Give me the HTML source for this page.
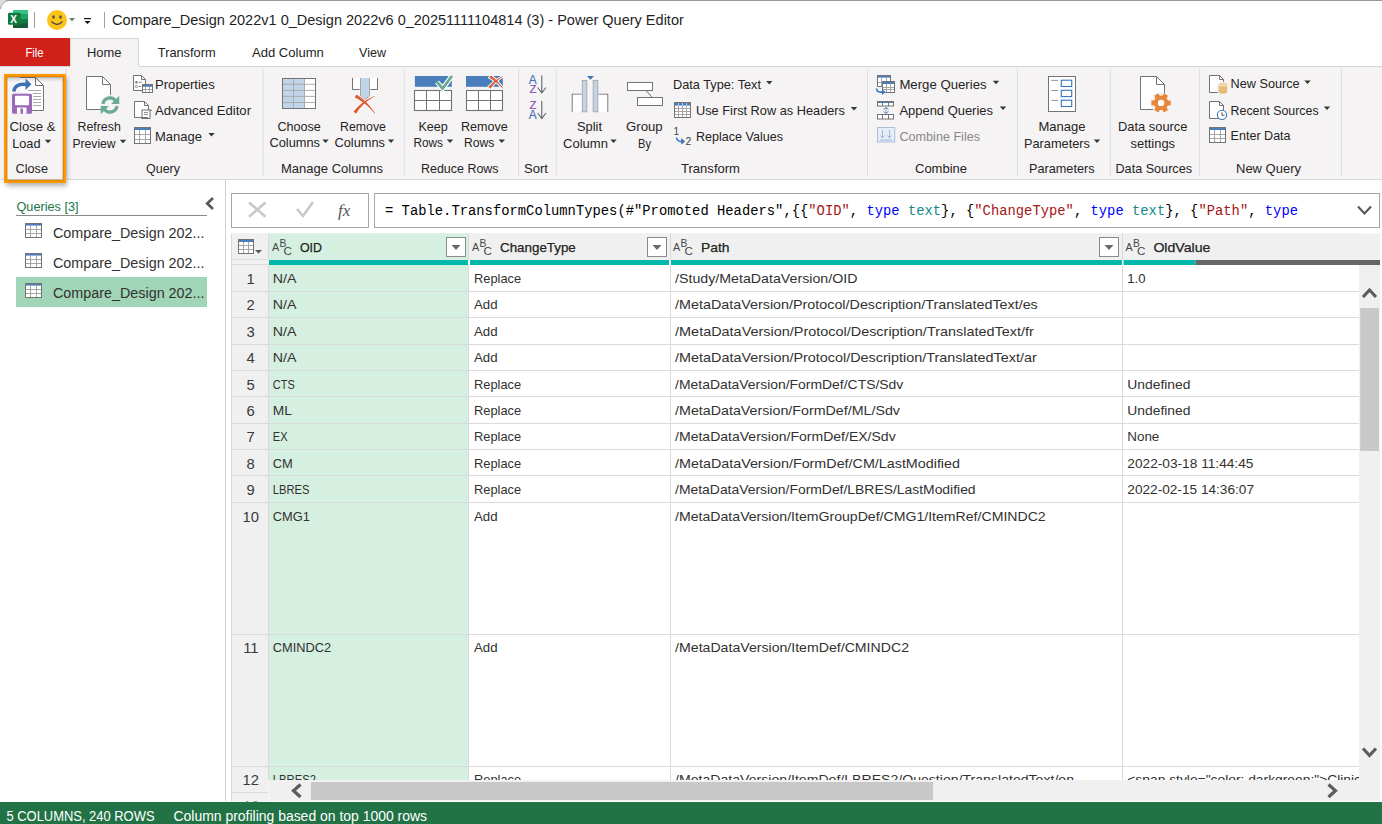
<!DOCTYPE html>
<html><head><meta charset="utf-8"><style>
html,body{margin:0;padding:0;width:1382px;height:824px;overflow:hidden;background:#fff}
svg{display:block;font-family:"Liberation Sans",sans-serif}
</style></head><body>
<svg width="1382" height="824" viewBox="0 0 1382 824"><rect x="0" y="0" width="1382" height="38" fill="#ffffff" /><rect x="0" y="0" width="1382" height="1" fill="#9a9a9a" /><path d="M0,0 H9 A9,9 0 0 0 0,9 Z" fill="#dcdcdc" /><path d="M9,0.5 A9,9 0 0 0 0.5,9" fill="none" stroke="#9a9a9a" stroke-width="1" /><rect x="13" y="10" width="15" height="18" fill="#185c37" /><rect x="13" y="10" width="15" height="4.5" fill="#33c481" /><rect x="13" y="14.5" width="15" height="4.5" fill="#21a366" /><rect x="13" y="19" width="15" height="4.5" fill="#107c41" /><rect x="13" y="23.5" width="15" height="4.4" fill="#185c37" /><rect x="8" y="12.7" width="12.7" height="12.1" fill="#107c41" rx="1"/><text x="10.20" y="22.60" font-size="10" fill="#ffffff" font-weight="bold" >X</text><line x1="34.5" y1="12" x2="34.5" y2="28" stroke="#8fa89a" stroke-width="1" /><circle cx="57" cy="20" r="10" fill="#fcc419"/><ellipse cx="53.5" cy="17" rx="1.3" ry="1.8" fill="#4a4a4a"/><ellipse cx="60.5" cy="17" rx="1.3" ry="1.8" fill="#4a4a4a"/><path d="M51.5,21.5 Q57,27.5 62.5,21.5" fill="none" stroke="#4a4a4a" stroke-width="1.3" /><path d="M69,18 h6 l-3,3.2 z" fill="#5e7c6c" /><rect x="84" y="18" width="7" height="1.2" fill="#111" /><path d="M84.5,21 h6 l-3,3 z" fill="#111" /><line x1="104.5" y1="12" x2="104.5" y2="28" stroke="#8fa89a" stroke-width="1" /><text x="112.00" y="24.80" font-size="15.2" fill="#1f1f1f" textLength="571.80" lengthAdjust="spacingAndGlyphs" >Compare_Design 2022v1 0_Design 2022v6 0_20251111104814 (3) - Power Query Editor</text><rect x="0" y="38" width="70" height="28" fill="#d2201a" /><text x="25.50" y="57.00" font-size="13.4" fill="#ffffff" textLength="18.00" lengthAdjust="spacingAndGlyphs" >File</text><rect x="70" y="38.5" width="69" height="28" fill="#f5f3f4" /><path d="M70.5,66 V38.5 H138.5 V66" fill="none" stroke="#d6d6d6" stroke-width="1" /><text x="87.00" y="57.00" font-size="13.4" fill="#252423" textLength="34.49" lengthAdjust="spacingAndGlyphs" >Home</text><text x="157.80" y="56.80" font-size="13.4" fill="#252423" textLength="57.80" lengthAdjust="spacingAndGlyphs" >Transform</text><text x="252.00" y="56.80" font-size="13.4" fill="#252423" textLength="71.80" lengthAdjust="spacingAndGlyphs" >Add Column</text><text x="359.00" y="56.80" font-size="13.4" fill="#252423" textLength="26.97" lengthAdjust="spacingAndGlyphs" >View</text><rect x="0" y="66" width="1382" height="113.5" fill="#f5f3f4" /><line x1="0" y1="66.5" x2="70" y2="66.5" stroke="#d6d6d6" stroke-width="1" /><line x1="139" y1="66.5" x2="1382" y2="66.5" stroke="#d6d6d6" stroke-width="1" /><line x1="0" y1="179.5" x2="1382" y2="179.5" stroke="#d9d9d9" stroke-width="1" /><line x1="66" y1="69" x2="66" y2="176" stroke="#dcdcdc" stroke-width="1" /><line x1="263" y1="69" x2="263" y2="176" stroke="#dcdcdc" stroke-width="1" /><line x1="404.3" y1="69" x2="404.3" y2="176" stroke="#dcdcdc" stroke-width="1" /><line x1="518.7" y1="69" x2="518.7" y2="176" stroke="#dcdcdc" stroke-width="1" /><line x1="556.3" y1="69" x2="556.3" y2="176" stroke="#dcdcdc" stroke-width="1" /><line x1="867.6" y1="69" x2="867.6" y2="176" stroke="#dcdcdc" stroke-width="1" /><line x1="1017.5" y1="69" x2="1017.5" y2="176" stroke="#dcdcdc" stroke-width="1" /><line x1="1110.2" y1="69" x2="1110.2" y2="176" stroke="#dcdcdc" stroke-width="1" /><line x1="1199.6" y1="69" x2="1199.6" y2="176" stroke="#dcdcdc" stroke-width="1" /><line x1="1341.4" y1="69" x2="1341.4" y2="176" stroke="#dcdcdc" stroke-width="1" /><text x="15.50" y="173.30" font-size="13.4" fill="#252423" textLength="32.50" lengthAdjust="spacingAndGlyphs" >Close</text><text x="146.00" y="173.30" font-size="13.4" fill="#252423" textLength="34.00" lengthAdjust="spacingAndGlyphs" >Query</text><text x="281.00" y="173.30" font-size="13.4" fill="#252423" textLength="102.01" lengthAdjust="spacingAndGlyphs" >Manage Columns</text><text x="421.00" y="173.30" font-size="13.4" fill="#252423" textLength="77.60" lengthAdjust="spacingAndGlyphs" >Reduce Rows</text><text x="524.00" y="173.30" font-size="13.4" fill="#252423" textLength="24.00" lengthAdjust="spacingAndGlyphs" >Sort</text><text x="681.00" y="173.30" font-size="13.4" fill="#252423" textLength="59.00" lengthAdjust="spacingAndGlyphs" >Transform</text><text x="915.00" y="173.30" font-size="13.4" fill="#252423" textLength="52.00" lengthAdjust="spacingAndGlyphs" >Combine</text><text x="1029.00" y="173.30" font-size="13.4" fill="#252423" textLength="65.59" lengthAdjust="spacingAndGlyphs" >Parameters</text><text x="1115.50" y="173.30" font-size="13.4" fill="#252423" textLength="76.49" lengthAdjust="spacingAndGlyphs" >Data Sources</text><text x="1236.00" y="173.30" font-size="13.4" fill="#252423" textLength="65.01" lengthAdjust="spacingAndGlyphs" >New Query</text><text x="9.50" y="131.00" font-size="13.4" fill="#252423" textLength="46.01" lengthAdjust="spacingAndGlyphs" >Close &amp;</text><text x="12.20" y="147.60" font-size="13.4" fill="#252423" textLength="28.29" lengthAdjust="spacingAndGlyphs" >Load</text><path d="M44.8,139.70000000000002 h6.4 l-3.2,3.5 z" fill="#2b3b35" /><text x="77.50" y="131.00" font-size="13.4" fill="#252423" textLength="43.31" lengthAdjust="spacingAndGlyphs" >Refresh</text><text x="72.40" y="147.60" font-size="13.4" fill="#252423" textLength="43.26" lengthAdjust="spacingAndGlyphs" >Preview</text><path d="M119.8,139.70000000000002 h6.4 l-3.2,3.5 z" fill="#2b3b35" /><text x="155.00" y="88.80" font-size="13.4" fill="#252423" textLength="59.70" lengthAdjust="spacingAndGlyphs" >Properties</text><text x="155.00" y="115.00" font-size="13.4" fill="#252423" textLength="96.00" lengthAdjust="spacingAndGlyphs" >Advanced Editor</text><text x="155.00" y="140.80" font-size="13.4" fill="#252423" textLength="47.00" lengthAdjust="spacingAndGlyphs" >Manage</text><path d="M208.3,132.9 h6.4 l-3.2,3.5 z" fill="#2b3b35" /><text x="277.40" y="130.70" font-size="13.4" fill="#252423" textLength="43.40" lengthAdjust="spacingAndGlyphs" >Choose</text><text x="269.50" y="147.40" font-size="13.4" fill="#252423" textLength="50.50" lengthAdjust="spacingAndGlyphs" >Columns</text><path d="M322.3,139.5 h6.4 l-3.2,3.5 z" fill="#2b3b35" /><text x="340.00" y="130.70" font-size="13.4" fill="#252423" textLength="46.00" lengthAdjust="spacingAndGlyphs" >Remove</text><text x="334.50" y="147.40" font-size="13.4" fill="#252423" textLength="50.50" lengthAdjust="spacingAndGlyphs" >Columns</text><path d="M387.8,139.5 h6.4 l-3.2,3.5 z" fill="#2b3b35" /><text x="418.50" y="130.70" font-size="13.4" fill="#252423" textLength="29.31" lengthAdjust="spacingAndGlyphs" >Keep</text><text x="413.50" y="147.40" font-size="13.4" fill="#252423" textLength="29.49" lengthAdjust="spacingAndGlyphs" >Rows</text><path d="M446.8,139.5 h6.4 l-3.2,3.5 z" fill="#2b3b35" /><text x="461.00" y="130.70" font-size="13.4" fill="#252423" textLength="46.80" lengthAdjust="spacingAndGlyphs" >Remove</text><text x="464.00" y="147.40" font-size="13.4" fill="#252423" textLength="30.39" lengthAdjust="spacingAndGlyphs" >Rows</text><path d="M498.6,139.5 h6.4 l-3.2,3.5 z" fill="#2b3b35" /><text x="577.00" y="131.00" font-size="13.4" fill="#252423" textLength="25.00" lengthAdjust="spacingAndGlyphs" >Split</text><text x="563.00" y="147.50" font-size="13.4" fill="#252423" textLength="45.00" lengthAdjust="spacingAndGlyphs" >Column</text><path d="M610.3,139.60000000000002 h6.4 l-3.2,3.5 z" fill="#2b3b35" /><text x="626.00" y="131.00" font-size="13.4" fill="#252423" textLength="36.70" lengthAdjust="spacingAndGlyphs" >Group</text><text x="638.00" y="147.50" font-size="13.4" fill="#252423" textLength="13.00" lengthAdjust="spacingAndGlyphs" >By</text><text x="673.00" y="89.20" font-size="13.4" fill="#252423" textLength="88.00" lengthAdjust="spacingAndGlyphs" >Data Type: Text</text><path d="M766.0999999999999,81.1 h6.4 l-3.2,3.5 z" fill="#2b3b35" /><text x="696.00" y="115.00" font-size="13.4" fill="#252423" textLength="149.00" lengthAdjust="spacingAndGlyphs" >Use First Row as Headers</text><path d="M850.8,107.0 h6.4 l-3.2,3.5 z" fill="#2b3b35" /><text x="696.00" y="141.30" font-size="13.4" fill="#252423" textLength="87.00" lengthAdjust="spacingAndGlyphs" >Replace Values</text><text x="899.40" y="88.60" font-size="13.4" fill="#252423" textLength="87.20" lengthAdjust="spacingAndGlyphs" >Merge Queries</text><path d="M992.8,80.7 h6.4 l-3.2,3.5 z" fill="#2b3b35" /><text x="899.40" y="115.20" font-size="13.4" fill="#252423" textLength="93.60" lengthAdjust="spacingAndGlyphs" >Append Queries</text><path d="M999.8,106.39999999999999 h6.4 l-3.2,3.5 z" fill="#2b3b35" /><text x="899.50" y="140.70" font-size="13.4" fill="#8a8886" textLength="80.50" lengthAdjust="spacingAndGlyphs" >Combine Files</text><text x="1038.50" y="131.00" font-size="13.4" fill="#252423" textLength="47.10" lengthAdjust="spacingAndGlyphs" >Manage</text><text x="1024.00" y="147.50" font-size="13.4" fill="#252423" textLength="65.99" lengthAdjust="spacingAndGlyphs" >Parameters</text><path d="M1093.8,139.60000000000002 h6.4 l-3.2,3.5 z" fill="#2b3b35" /><text x="1118.00" y="130.90" font-size="13.4" fill="#252423" textLength="69.49" lengthAdjust="spacingAndGlyphs" >Data source</text><text x="1130.60" y="147.60" font-size="13.4" fill="#252423" textLength="44.40" lengthAdjust="spacingAndGlyphs" >settings</text><text x="1230.60" y="88.40" font-size="13.4" fill="#252423" textLength="69.00" lengthAdjust="spacingAndGlyphs" >New Source</text><path d="M1304.3,80.5 h6.4 l-3.2,3.5 z" fill="#2b3b35" /><text x="1230.60" y="115.20" font-size="13.4" fill="#252423" textLength="88.00" lengthAdjust="spacingAndGlyphs" >Recent Sources</text><path d="M1323.8,106.39999999999999 h6.4 l-3.2,3.5 z" fill="#2b3b35" /><text x="1230.60" y="140.00" font-size="13.4" fill="#252423" textLength="59.99" lengthAdjust="spacingAndGlyphs" >Enter Data</text><filter id="shb" x="-20%" y="-20%" width="140%" height="140%"><feGaussianBlur stdDeviation="2.6"/></filter><clipPath id="shc"><path d="M0,0 H200 V260 H0 Z M4,74 V183 H66 V74 Z" clip-rule="evenodd"/></clipPath><g clip-path="url(#shc)"><rect x="6" y="77" width="61" height="109" fill="#000" fill-opacity="0.30" filter="url(#shb)"/></g><rect x="5.6" y="75.6" width="58.8" height="105.8" fill="none" stroke="#ff9800" stroke-width="3.2"/><text x="16.50" y="211.00" font-size="13.4" fill="#217346" textLength="62.00" lengthAdjust="spacingAndGlyphs" >Queries [3]</text><line x1="16" y1="215.5" x2="207" y2="215.5" stroke="#8a8a8a" stroke-width="1" /><path d="M213,198 L207.2,203.5 L213,209" fill="none" stroke="#555" stroke-width="2.6" /><rect x="16" y="277" width="191" height="30" fill="#a0d6b7" /><text x="53.00" y="237.70" font-size="15.3" fill="#323130" textLength="151.49" lengthAdjust="spacingAndGlyphs" >Compare_Design 202...</text><text x="53.00" y="267.70" font-size="15.3" fill="#323130" textLength="151.49" lengthAdjust="spacingAndGlyphs" >Compare_Design 202...</text><text x="53.00" y="297.70" font-size="15.3" fill="#323130" textLength="151.49" lengthAdjust="spacingAndGlyphs" >Compare_Design 202...</text><line x1="225.5" y1="180" x2="225.5" y2="801" stroke="#d0d0d0" stroke-width="1" /><rect x="231.5" y="193.5" width="137" height="34" fill="#ffffff" stroke="#a6a6a6" stroke-width="1"/><path d="M249,202.5 L265.5,216.8 M265.5,202.5 L249,216.8" fill="none" stroke="#c8c8c8" stroke-width="2.6" /><path d="M297,209 L303,216 L313,202" fill="none" stroke="#c8c8c8" stroke-width="2.6" /><text x="338" y="216" font-family="Liberation Serif, serif" font-style="italic" font-size="17" fill="#555">fx</text><rect x="374.5" y="193.5" width="1005" height="34" fill="#ffffff" stroke="#a6a6a6" stroke-width="1"/><text x="385" y="215" font-family="Liberation Mono, monospace" font-size="13.8" textLength="913" lengthAdjust="spacing" xml:space="preserve"><tspan fill="#000">= Table.TransformColumnTypes(#"Promoted Headers",{{</tspan><tspan fill="#a31515">"OID"</tspan><tspan fill="#000">, </tspan><tspan fill="#0000ff">type</tspan><tspan fill="#000"> </tspan><tspan fill="#16897f">text</tspan><tspan fill="#000">}, {</tspan><tspan fill="#a31515">"ChangeType"</tspan><tspan fill="#000">, </tspan><tspan fill="#0000ff">type</tspan><tspan fill="#000"> </tspan><tspan fill="#16897f">text</tspan><tspan fill="#000">}, {</tspan><tspan fill="#a31515">"Path"</tspan><tspan fill="#000">, </tspan><tspan fill="#0000ff">type</tspan></text><path d="M1358,206.5 L1364.5,213.5 L1371,206.5" fill="none" stroke="#555" stroke-width="2" /><rect x="231" y="233.5" width="1149" height="568" fill="#ffffff" /><rect x="231" y="233.5" width="1128" height="26.5" fill="#f0f0f0" /><rect x="231" y="233.5" width="1149" height="26.5" fill="#f0f0f0" /><rect x="269" y="233.5" width="199.5" height="26.5" fill="#d5efe0" /><rect x="231" y="260" width="37.5" height="541.5" fill="#f0f0f0" /><rect x="269" y="265" width="199" height="536" fill="#d5efe0" /><rect x="269" y="260" width="199" height="5" fill="#01b8aa" /><rect x="470" y="260" width="199" height="5" fill="#01b8aa" /><rect x="671" y="260" width="451" height="5" fill="#01b8aa" /><rect x="1123.5" y="260" width="72" height="5" fill="#01b8aa" /><rect x="1195.5" y="260" width="184.5" height="5" fill="#666666" /><line x1="231" y1="259.5" x2="268.5" y2="259.5" stroke="#dadada" stroke-width="1" /><line x1="231" y1="264.5" x2="268.5" y2="264.5" stroke="#dadada" stroke-width="1" /><line x1="231.5" y1="233.5" x2="231.5" y2="801.5" stroke="#dadada" stroke-width="1" /><line x1="268.5" y1="233.5" x2="268.5" y2="260" stroke="#dadada" stroke-width="1" /><line x1="268.5" y1="265" x2="268.5" y2="780" stroke="#dadada" stroke-width="1" /><line x1="468.5" y1="233.5" x2="468.5" y2="260" stroke="#dadada" stroke-width="1" /><line x1="468.5" y1="265" x2="468.5" y2="780" stroke="#dadada" stroke-width="1" /><line x1="670.5" y1="233.5" x2="670.5" y2="260" stroke="#dadada" stroke-width="1" /><line x1="670.5" y1="265" x2="670.5" y2="780" stroke="#dadada" stroke-width="1" /><line x1="1122.5" y1="233.5" x2="1122.5" y2="260" stroke="#dadada" stroke-width="1" /><line x1="1122.5" y1="265" x2="1122.5" y2="780" stroke="#dadada" stroke-width="1" /><line x1="231" y1="291.5" x2="268.5" y2="291.5" stroke="#dadada" stroke-width="1" /><line x1="269" y1="291.5" x2="1359" y2="291.5" stroke="#dadada" stroke-width="1" /><line x1="231" y1="317.5" x2="268.5" y2="317.5" stroke="#dadada" stroke-width="1" /><line x1="269" y1="317.5" x2="1359" y2="317.5" stroke="#dadada" stroke-width="1" /><line x1="231" y1="344.5" x2="268.5" y2="344.5" stroke="#dadada" stroke-width="1" /><line x1="269" y1="344.5" x2="1359" y2="344.5" stroke="#dadada" stroke-width="1" /><line x1="231" y1="370.5" x2="268.5" y2="370.5" stroke="#dadada" stroke-width="1" /><line x1="269" y1="370.5" x2="1359" y2="370.5" stroke="#dadada" stroke-width="1" /><line x1="231" y1="396.5" x2="268.5" y2="396.5" stroke="#dadada" stroke-width="1" /><line x1="269" y1="396.5" x2="1359" y2="396.5" stroke="#dadada" stroke-width="1" /><line x1="231" y1="423.5" x2="268.5" y2="423.5" stroke="#dadada" stroke-width="1" /><line x1="269" y1="423.5" x2="1359" y2="423.5" stroke="#dadada" stroke-width="1" /><line x1="231" y1="449.5" x2="268.5" y2="449.5" stroke="#dadada" stroke-width="1" /><line x1="269" y1="449.5" x2="1359" y2="449.5" stroke="#dadada" stroke-width="1" /><line x1="231" y1="475.5" x2="268.5" y2="475.5" stroke="#dadada" stroke-width="1" /><line x1="269" y1="475.5" x2="1359" y2="475.5" stroke="#dadada" stroke-width="1" /><line x1="231" y1="502.5" x2="268.5" y2="502.5" stroke="#dadada" stroke-width="1" /><line x1="269" y1="502.5" x2="1359" y2="502.5" stroke="#dadada" stroke-width="1" /><line x1="231" y1="634.5" x2="268.5" y2="634.5" stroke="#dadada" stroke-width="1" /><line x1="269" y1="634.5" x2="1359" y2="634.5" stroke="#dadada" stroke-width="1" /><line x1="231" y1="766.5" x2="268.5" y2="766.5" stroke="#dadada" stroke-width="1" /><line x1="269" y1="766.5" x2="1359" y2="766.5" stroke="#dadada" stroke-width="1" /><line x1="231" y1="792.5" x2="268.5" y2="792.5" stroke="#dadada" stroke-width="1" /><line x1="269" y1="792.5" x2="1359" y2="792.5" stroke="#dadada" stroke-width="1" /><rect x="238.5" y="239.5" width="15" height="14" fill="#ffffff" /><rect x="238" y="239" width="16" height="3" fill="#4a7ebb" /><path d="M238.5,245.5 H253.5 M238.5,249.5 H253.5 M243.5,242 V253.5 M248.5,242 V253.5" fill="none" stroke="#a6a6a6" stroke-width="1" /><rect x="238.5" y="239.5" width="15" height="14" fill="none" stroke="#737373" stroke-width="1"/><path d="M255,250 h7 l-3.5,3.6 z" fill="#555" /><text x="272.00" y="251.00" font-size="10.8" fill="#474747" >A</text><text x="279.60" y="247.00" font-size="10.3" fill="#474747" >B</text><text x="283.60" y="255.00" font-size="11.6" fill="#474747" >C</text><text x="300.00" y="252.20" font-size="12.8" fill="#252423" textLength="22.00" lengthAdjust="spacingAndGlyphs" stroke="#252423" stroke-width="0.25">OID</text><rect x="446.5" y="237.5" width="19" height="19" fill="#ffffff" stroke="#8a8a8a" stroke-width="1"/><path d="M451.5,245 h9 l-4.5,5 z" fill="#6a6a6a" /><text x="472.00" y="251.00" font-size="10.8" fill="#474747" >A</text><text x="479.60" y="247.00" font-size="10.3" fill="#474747" >B</text><text x="483.60" y="255.00" font-size="11.6" fill="#474747" >C</text><text x="500.00" y="252.20" font-size="12.8" fill="#252423" textLength="75.80" lengthAdjust="spacingAndGlyphs" stroke="#252423" stroke-width="0.25">ChangeType</text><rect x="647.5" y="237.5" width="19" height="19" fill="#ffffff" stroke="#8a8a8a" stroke-width="1"/><path d="M652.5,245 h9 l-4.5,5 z" fill="#6a6a6a" /><text x="673.00" y="251.00" font-size="10.8" fill="#474747" >A</text><text x="680.60" y="247.00" font-size="10.3" fill="#474747" >B</text><text x="684.60" y="255.00" font-size="11.6" fill="#474747" >C</text><text x="701.00" y="252.20" font-size="12.8" fill="#252423" textLength="28.50" lengthAdjust="spacingAndGlyphs" stroke="#252423" stroke-width="0.25">Path</text><rect x="1099.5" y="237.5" width="19" height="19" fill="#ffffff" stroke="#8a8a8a" stroke-width="1"/><path d="M1104.5,245 h9 l-4.5,5 z" fill="#6a6a6a" /><text x="1125.40" y="251.00" font-size="10.8" fill="#474747" >A</text><text x="1133.00" y="247.00" font-size="10.3" fill="#474747" >B</text><text x="1137.00" y="255.00" font-size="11.6" fill="#474747" >C</text><text x="1153.40" y="252.20" font-size="12.8" fill="#252423" textLength="56.99" lengthAdjust="spacingAndGlyphs" stroke="#252423" stroke-width="0.25">OldValue</text><clipPath id="gclip"><rect x="231" y="265" width="1128" height="515"/></clipPath><g clip-path="url(#gclip)"><text x="272.80" y="283.00" font-size="12.7" fill="#323130" textLength="23.70" lengthAdjust="spacingAndGlyphs" >N/A</text><text x="474.00" y="283.00" font-size="12.7" fill="#323130" textLength="47.20" lengthAdjust="spacingAndGlyphs" >Replace</text><text x="675.10" y="283.00" font-size="12.7" fill="#323130" textLength="182.31" lengthAdjust="spacingAndGlyphs" >/Study/MetaDataVersion/OID</text><text x="1127.30" y="283.00" font-size="12.7" fill="#323130" textLength="18.30" lengthAdjust="spacingAndGlyphs" >1.0</text><text x="272.80" y="309.00" font-size="12.7" fill="#323130" textLength="23.70" lengthAdjust="spacingAndGlyphs" >N/A</text><text x="474.00" y="309.00" font-size="12.7" fill="#323130" textLength="23.60" lengthAdjust="spacingAndGlyphs" >Add</text><text x="675.10" y="309.00" font-size="12.7" fill="#323130" textLength="362.70" lengthAdjust="spacingAndGlyphs" >/MetaDataVersion/Protocol/Description/TranslatedText/es</text><text x="272.80" y="336.00" font-size="12.7" fill="#323130" textLength="23.70" lengthAdjust="spacingAndGlyphs" >N/A</text><text x="474.00" y="336.00" font-size="12.7" fill="#323130" textLength="23.60" lengthAdjust="spacingAndGlyphs" >Add</text><text x="675.10" y="336.00" font-size="12.7" fill="#323130" textLength="358.70" lengthAdjust="spacingAndGlyphs" >/MetaDataVersion/Protocol/Description/TranslatedText/fr</text><text x="272.80" y="362.00" font-size="12.7" fill="#323130" textLength="23.70" lengthAdjust="spacingAndGlyphs" >N/A</text><text x="474.00" y="362.00" font-size="12.7" fill="#323130" textLength="23.60" lengthAdjust="spacingAndGlyphs" >Add</text><text x="675.10" y="362.00" font-size="12.7" fill="#323130" textLength="361.70" lengthAdjust="spacingAndGlyphs" >/MetaDataVersion/Protocol/Description/TranslatedText/ar</text><text x="272.80" y="389.00" font-size="12.7" fill="#323130" textLength="22.00" lengthAdjust="spacingAndGlyphs" >CTS</text><text x="474.00" y="389.00" font-size="12.7" fill="#323130" textLength="47.20" lengthAdjust="spacingAndGlyphs" >Replace</text><text x="675.10" y="389.00" font-size="12.7" fill="#323130" textLength="228.20" lengthAdjust="spacingAndGlyphs" >/MetaDataVersion/FormDef/CTS/Sdv</text><text x="1127.30" y="389.00" font-size="12.7" fill="#323130" textLength="63.20" lengthAdjust="spacingAndGlyphs" >Undefined</text><text x="272.80" y="415.00" font-size="12.7" fill="#323130" textLength="19.10" lengthAdjust="spacingAndGlyphs" >ML</text><text x="474.00" y="415.00" font-size="12.7" fill="#323130" textLength="47.20" lengthAdjust="spacingAndGlyphs" >Replace</text><text x="675.10" y="415.00" font-size="12.7" fill="#323130" textLength="224.90" lengthAdjust="spacingAndGlyphs" >/MetaDataVersion/FormDef/ML/Sdv</text><text x="1127.30" y="415.00" font-size="12.7" fill="#323130" textLength="63.20" lengthAdjust="spacingAndGlyphs" >Undefined</text><text x="272.80" y="441.00" font-size="12.7" fill="#323130" textLength="14.70" lengthAdjust="spacingAndGlyphs" >EX</text><text x="474.00" y="441.00" font-size="12.7" fill="#323130" textLength="47.20" lengthAdjust="spacingAndGlyphs" >Replace</text><text x="675.10" y="441.00" font-size="12.7" fill="#323130" textLength="220.60" lengthAdjust="spacingAndGlyphs" >/MetaDataVersion/FormDef/EX/Sdv</text><text x="1127.30" y="441.00" font-size="12.7" fill="#323130" textLength="32.00" lengthAdjust="spacingAndGlyphs" >None</text><text x="272.80" y="468.00" font-size="12.7" fill="#323130" textLength="20.00" lengthAdjust="spacingAndGlyphs" >CM</text><text x="474.00" y="468.00" font-size="12.7" fill="#323130" textLength="47.20" lengthAdjust="spacingAndGlyphs" >Replace</text><text x="675.10" y="468.00" font-size="12.7" fill="#323130" textLength="284.89" lengthAdjust="spacingAndGlyphs" >/MetaDataVersion/FormDef/CM/LastModified</text><text x="1127.30" y="468.00" font-size="12.7" fill="#323130" textLength="126.11" lengthAdjust="spacingAndGlyphs" >2022-03-18 11:44:45</text><text x="272.80" y="494.00" font-size="12.7" fill="#323130" textLength="36.60" lengthAdjust="spacingAndGlyphs" >LBRES</text><text x="474.00" y="494.00" font-size="12.7" fill="#323130" textLength="47.20" lengthAdjust="spacingAndGlyphs" >Replace</text><text x="675.10" y="494.00" font-size="12.7" fill="#323130" textLength="300.50" lengthAdjust="spacingAndGlyphs" >/MetaDataVersion/FormDef/LBRES/LastModified</text><text x="1127.30" y="494.00" font-size="12.7" fill="#323130" textLength="126.70" lengthAdjust="spacingAndGlyphs" >2022-02-15 14:36:07</text><text x="272.80" y="521.00" font-size="12.7" fill="#323130" textLength="37.20" lengthAdjust="spacingAndGlyphs" >CMG1</text><text x="474.00" y="521.00" font-size="12.7" fill="#323130" textLength="23.60" lengthAdjust="spacingAndGlyphs" >Add</text><text x="675.10" y="521.00" font-size="12.7" fill="#323130" textLength="370.60" lengthAdjust="spacingAndGlyphs" >/MetaDataVersion/ItemGroupDef/CMG1/ItemRef/CMINDC2</text><text x="272.80" y="652.00" font-size="12.7" fill="#323130" textLength="58.40" lengthAdjust="spacingAndGlyphs" >CMINDC2</text><text x="474.00" y="652.00" font-size="12.7" fill="#323130" textLength="23.60" lengthAdjust="spacingAndGlyphs" >Add</text><text x="675.10" y="652.00" font-size="12.7" fill="#323130" textLength="233.90" lengthAdjust="spacingAndGlyphs" >/MetaDataVersion/ItemDef/CMINDC2</text><text x="272.80" y="784.00" font-size="12.7" fill="#323130" textLength="43.21" lengthAdjust="spacingAndGlyphs" >LBRES2</text><text x="474.00" y="784.00" font-size="12.7" fill="#323130" textLength="47.20" lengthAdjust="spacingAndGlyphs" >Replace</text><text x="675.10" y="784.00" font-size="12.7" fill="#323130" textLength="398.90" lengthAdjust="spacingAndGlyphs" >/MetaDataVersion/ItemDef/LBRES2/Question/TranslatedText/en</text><text x="1127.30" y="784.00" font-size="12.7" fill="#323130" textLength="271.35" lengthAdjust="spacingAndGlyphs" >&lt;span style=&quot;color: darkgreen;&quot;&gt;Clinical Lab</text></g><clipPath id="rclip"><rect x="231" y="265" width="37" height="536.5"/></clipPath><g clip-path="url(#rclip)"><text x="246.51" y="284.00" font-size="14.8" fill="#3b3a39" >1</text><text x="246.51" y="310.00" font-size="14.8" fill="#3b3a39" >2</text><text x="246.51" y="337.00" font-size="14.8" fill="#3b3a39" >3</text><text x="246.51" y="363.00" font-size="14.8" fill="#3b3a39" >4</text><text x="246.51" y="390.00" font-size="14.8" fill="#3b3a39" >5</text><text x="246.51" y="416.00" font-size="14.8" fill="#3b3a39" >6</text><text x="246.51" y="442.00" font-size="14.8" fill="#3b3a39" >7</text><text x="246.51" y="469.00" font-size="14.8" fill="#3b3a39" >8</text><text x="246.51" y="495.00" font-size="14.8" fill="#3b3a39" >9</text><text x="242.61" y="522.00" font-size="14.8" fill="#3b3a39" >10</text><text x="243.13" y="653.00" font-size="14.8" fill="#3b3a39" >11</text><text x="242.61" y="785.00" font-size="14.8" fill="#3b3a39" >12</text><text x="243.00" y="811.00" font-size="14.8" fill="#3b3a39" >13</text></g><rect x="1359" y="265" width="21" height="536" fill="#f0f0f0" /><rect x="1360.2" y="308" width="18.7" height="143" fill="#c8c8c8" /><path d="M1363,297 L1369.5,290 L1376,297" fill="none" stroke="#5c5c5c" stroke-width="3.2" /><path d="M1363,748.5 L1369.5,755.5 L1376,748.5" fill="none" stroke="#5c5c5c" stroke-width="3.2" /><rect x="269" y="780" width="1090" height="21" fill="#f0f0f0" /><rect x="311" y="782" width="622" height="18" fill="#c8c8c8" /><path d="M300.5,784.5 L293.5,790.8 L300.5,797" fill="none" stroke="#5c5c5c" stroke-width="3.2" /><path d="M1328.5,784.5 L1335.5,790.8 L1328.5,797" fill="none" stroke="#5c5c5c" stroke-width="3.2" /><rect x="0" y="802" width="1382" height="22" fill="#217346" /><text x="6.50" y="820.60" font-size="13.8" fill="#ffffff" textLength="148.00" lengthAdjust="spacingAndGlyphs" >5 COLUMNS, 240 ROWS</text><text x="173.50" y="820.60" font-size="13.8" fill="#ffffff" textLength="253.50" lengthAdjust="spacingAndGlyphs" >Column profiling based on top 1000 rows</text><rect x="7" y="77" width="56" height="103" fill="none" stroke="#000" stroke-opacity="0.10" stroke-width="2"/><path d="M19.5,77.5 H35.5 L43.5,85.5 V110.5 H28 V92 H19.5 Z" fill="#fff" /><path d="M19.5,77.5 H35.5 L43.5,85.5 V110.5 H30" fill="none" stroke="#737373" stroke-width="1" /><path d="M35.5,77.5 V85.5 H43.5" fill="none" stroke="#737373" stroke-width="1" /><defs><linearGradient id="ish" x1="0" y1="0" x2="0" y2="1"><stop offset="0" stop-color="#000" stop-opacity="0.16"/><stop offset="1" stop-color="#000" stop-opacity="0"/></linearGradient></defs><rect x="7.2" y="77.2" width="55.6" height="5" fill="url(#ish)" /><path d="M28,90.5 H41 M33,93.5 H41 M33,96.5 H41 M33,99.5 H41 M33,102.5 H41 M33,105.5 H41" fill="none" stroke="#a0a0a0" stroke-width="0.9" /><rect x="12" y="93.8" width="20" height="20" fill="#9b69b8" rx="1.5"/><rect x="15" y="95.8" width="14" height="9.5" fill="#ffffff" rx="1"/><rect x="17" y="107.5" width="9.5" height="6.3" fill="#ffffff" /><rect x="20.5" y="108.5" width="2.5" height="5.3" fill="#9b69b8" /><path d="M13.8,91.5 C14.5,85.5 19.5,83.5 27,84.5" fill="none" stroke="#ffffff" stroke-width="5.2" /><path d="M13.8,91.5 C14.5,85.5 19.5,83.5 27,84.5" fill="none" stroke="#3d73b4" stroke-width="3.4" /><path d="M25.5,78.5 L31.5,84.2 L25.5,90 Z" fill="#3d73b4" /><path d="M86.5,76.5 H102.5 L110.5,84.5 V109.5 H86.5 Z" fill="#fff" stroke="#737373" stroke-width="1" /><path d="M102.5,76.5 V84.5 H110.5" fill="none" stroke="#737373" stroke-width="1" /><circle cx="110" cy="105" r="10" fill="#f5f3f4"/><path d="M103,104 A7,7 0 0 1 115.8,101.2" fill="none" stroke="#6aaa90" stroke-width="3.2" /><path d="M119.2,95.8 L119.3,104 L111.2,104 Z" fill="#6aaa90" /><path d="M117,106 A7,7 0 0 1 104.2,108.8" fill="none" stroke="#6aaa90" stroke-width="3.2" /><path d="M100.8,114.2 L100.7,106 L108.8,106 Z" fill="#6aaa90" /><path d="M133.5,75.5 H141.5 L145.5,79.5 V90.5 H133.5 Z" fill="#fff" stroke="#737373" stroke-width="1" /><path d="M141.5,75.5 V79.5 H145.5" fill="none" stroke="#737373" stroke-width="1" /><circle cx="136.4" cy="82.3" r="1.2" fill="#737373"/><circle cx="136.4" cy="86.5" r="1.1" fill="none" stroke="#737373" stroke-width="0.8"/><path d="M138.8,82.3 H141.5 M138.8,86.5 H141" fill="none" stroke="#737373" stroke-width="0.9" /><rect x="142.5" y="84.5" width="10.0" height="8.0" fill="#fff" /><rect x="142.0" y="84.0" width="11.0" height="2.8" fill="#4a7ebb" /><path d="M145.50,86.8 V92.5 M149.50,86.8 V92.5 M142.5,89.50 H152.5 " fill="none" stroke="#a6a6a6" stroke-width="1" /><rect x="142.5" y="84.5" width="10.0" height="8.0" fill="none" stroke="#737373" stroke-width="1"/><path d="M134.5,101.5 H144.5 L148.5,105.5 V117.5 H134.5 Z" fill="#fff" stroke="#737373" stroke-width="1" /><path d="M144.5,101.5 V105.5 H148.5" fill="none" stroke="#737373" stroke-width="1" /><rect x="142" y="110" width="8" height="8.5" fill="#fff" stroke="#737373" stroke-width="1"/><path d="M144,112.5 H148 M144,114.5 H148" fill="none" stroke="#737373" stroke-width="0.8" /><rect x="141.5" y="117" width="6.5" height="2" fill="#737373" /><path d="M149.5,110.3 H152" fill="none" stroke="#737373" stroke-width="1" /><rect x="134.5" y="127.5" width="16.0" height="16.0" fill="#fff" /><rect x="134.0" y="127.0" width="17.0" height="3" fill="#4a7ebb" /><path d="M139.50,130.0 V143.5 M145.50,130.0 V143.5 M134.5,134.50 H150.5 M134.5,139.50 H150.5 " fill="none" stroke="#a6a6a6" stroke-width="1" /><rect x="134.5" y="127.5" width="16.0" height="16.0" fill="none" stroke="#737373" stroke-width="1"/><rect x="282.2" y="78.2" width="33.6" height="30.6" fill="#fff" /><rect x="282.7" y="78.7" width="22" height="29.6" fill="#c0d4ea" /><path d="M293.5,78.2 V108.8 M304.5,78.2 V108.8 M282.2,84.3 H315.8 M282.2,90.4 H315.8 M282.2,96.4 H315.8 M282.2,102.5 H315.8" fill="none" stroke="#a6a6a6" stroke-width="0.9" /><rect x="282.5" y="78.5" width="33" height="30" fill="none" stroke="#737373" stroke-width="1"/><rect x="352.5" y="78" width="25" height="11.5" fill="#fff" /><path d="M352.5,78 V89.5 H359.5 M377.5,78 V89.5 H370.5" fill="none" stroke="#737373" stroke-width="1" /><path d="M360.5,78 V96 L365,99.5 L369.5,96 V78 Z" fill="#c0d4ea" /><path d="M360.5,78 V96 L365,99.5 L369.5,96 V78" fill="none" stroke="#a6a6a6" stroke-width="1" /><path d="M354.66,97.59 L355.96,98.20 L357.26,98.85 L358.55,99.56 L359.84,100.32 L361.12,101.14 L362.39,102.01 L363.66,102.93 L364.92,103.91 L366.18,104.94 L367.43,106.02 L368.67,107.16 L369.91,108.36 L371.13,109.61 L372.35,110.91 L373.56,112.27 L374.76,113.68 L375.24,113.32 L374.18,111.78 L373.10,110.29 L372.01,108.85 L370.91,107.45 L369.79,106.11 L368.65,104.80 L367.50,103.55 L366.33,102.34 L365.14,101.18 L363.94,100.07 L362.72,99.01 L361.48,97.99 L360.22,97.02 L358.94,96.10 L357.65,95.23 L356.34,94.41 Z M356.21,113.74 L357.03,112.41 L357.89,111.11 L358.81,109.84 L359.77,108.60 L360.77,107.40 L361.83,106.22 L362.93,105.08 L364.09,103.97 L365.29,102.89 L366.55,101.84 L367.85,100.83 L369.21,99.85 L370.61,98.91 L372.07,97.99 L373.57,97.12 L375.13,96.27 L374.87,95.73 L373.22,96.42 L371.62,97.16 L370.05,97.93 L368.52,98.75 L367.03,99.61 L365.58,100.51 L364.18,101.45 L362.81,102.43 L361.49,103.46 L360.20,104.53 L358.96,105.64 L357.76,106.80 L356.60,108.00 L355.49,109.24 L354.41,110.53 L353.39,111.86 Z" fill="none" stroke="#fff" stroke-width="1.6" /><path d="M354.66,97.59 L355.96,98.20 L357.26,98.85 L358.55,99.56 L359.84,100.32 L361.12,101.14 L362.39,102.01 L363.66,102.93 L364.92,103.91 L366.18,104.94 L367.43,106.02 L368.67,107.16 L369.91,108.36 L371.13,109.61 L372.35,110.91 L373.56,112.27 L374.76,113.68 L375.24,113.32 L374.18,111.78 L373.10,110.29 L372.01,108.85 L370.91,107.45 L369.79,106.11 L368.65,104.80 L367.50,103.55 L366.33,102.34 L365.14,101.18 L363.94,100.07 L362.72,99.01 L361.48,97.99 L360.22,97.02 L358.94,96.10 L357.65,95.23 L356.34,94.41 Z" fill="#dc5f3a" /><path d="M356.21,113.74 L357.03,112.41 L357.89,111.11 L358.81,109.84 L359.77,108.60 L360.77,107.40 L361.83,106.22 L362.93,105.08 L364.09,103.97 L365.29,102.89 L366.55,101.84 L367.85,100.83 L369.21,99.85 L370.61,98.91 L372.07,97.99 L373.57,97.12 L375.13,96.27 L374.87,95.73 L373.22,96.42 L371.62,97.16 L370.05,97.93 L368.52,98.75 L367.03,99.61 L365.58,100.51 L364.18,101.45 L362.81,102.43 L361.49,103.46 L360.20,104.53 L358.96,105.64 L357.76,106.80 L356.60,108.00 L355.49,109.24 L354.41,110.53 L353.39,111.86 Z" fill="#dc5f3a" /><rect x="414.9" y="76" width="36.9" height="10.8" fill="#4a7ebb" /><rect x="414.5" y="90.5" width="37.0" height="20.0" fill="#fff" /><path d="M426.50,90.0 V110.5 M439.50,90.0 V110.5 M414.5,100.50 H451.5 " fill="none" stroke="#737373" stroke-width="1" /><rect x="414.5" y="90.5" width="37.0" height="20.0" fill="none" stroke="#737373" stroke-width="1.1"/><path d="M437,82 L442.6,88.6 L452,76" fill="none" stroke="#ffffff" stroke-width="5" /><path d="M437,82 L442.6,88.6 L452,76" fill="none" stroke="#6aaa90" stroke-width="2.8" /><rect x="466" y="76" width="36.8" height="10.8" fill="#4a7ebb" /><rect x="466.5" y="90.5" width="36.0" height="20.0" fill="#fff" /><path d="M478.50,90.0 V110.5 M490.50,90.0 V110.5 M466.5,100.50 H502.5 " fill="none" stroke="#737373" stroke-width="1" /><rect x="466.5" y="90.5" width="36.0" height="20.0" fill="none" stroke="#737373" stroke-width="1.1"/><path d="M489.19,77.76 L490.07,78.25 L490.95,78.77 L491.83,79.32 L492.70,79.88 L493.57,80.48 L494.43,81.10 L495.29,81.74 L496.14,82.41 L496.99,83.11 L497.83,83.83 L498.67,84.57 L499.50,85.35 L500.32,86.14 L501.14,86.97 L501.96,87.81 L502.77,88.69 L503.23,88.31 L502.53,87.33 L501.83,86.38 L501.11,85.44 L500.38,84.53 L499.64,83.64 L498.89,82.77 L498.13,81.92 L497.36,81.09 L496.58,80.28 L495.79,79.50 L494.99,78.73 L494.17,77.99 L493.35,77.27 L492.52,76.57 L491.67,75.89 L490.81,75.24 Z M490.62,88.64 L491.24,87.73 L491.88,86.84 L492.54,85.97 L493.22,85.13 L493.93,84.31 L494.65,83.51 L495.40,82.73 L496.17,81.98 L496.96,81.25 L497.78,80.54 L498.61,79.85 L499.47,79.19 L500.35,78.55 L501.26,77.93 L502.18,77.34 L503.13,76.77 L502.87,76.23 L501.84,76.69 L500.82,77.17 L499.82,77.68 L498.84,78.23 L497.88,78.79 L496.93,79.39 L495.99,80.02 L495.08,80.67 L494.18,81.36 L493.30,82.07 L492.44,82.81 L491.59,83.58 L490.76,84.38 L489.95,85.21 L489.16,86.07 L488.38,86.96 Z" fill="#fff" stroke="#fff" stroke-width="1.8" /><path d="M489.19,77.76 L490.07,78.25 L490.95,78.77 L491.83,79.32 L492.70,79.88 L493.57,80.48 L494.43,81.10 L495.29,81.74 L496.14,82.41 L496.99,83.11 L497.83,83.83 L498.67,84.57 L499.50,85.35 L500.32,86.14 L501.14,86.97 L501.96,87.81 L502.77,88.69 L503.23,88.31 L502.53,87.33 L501.83,86.38 L501.11,85.44 L500.38,84.53 L499.64,83.64 L498.89,82.77 L498.13,81.92 L497.36,81.09 L496.58,80.28 L495.79,79.50 L494.99,78.73 L494.17,77.99 L493.35,77.27 L492.52,76.57 L491.67,75.89 L490.81,75.24 Z" fill="#dc5f3a" /><path d="M490.62,88.64 L491.24,87.73 L491.88,86.84 L492.54,85.97 L493.22,85.13 L493.93,84.31 L494.65,83.51 L495.40,82.73 L496.17,81.98 L496.96,81.25 L497.78,80.54 L498.61,79.85 L499.47,79.19 L500.35,78.55 L501.26,77.93 L502.18,77.34 L503.13,76.77 L502.87,76.23 L501.84,76.69 L500.82,77.17 L499.82,77.68 L498.84,78.23 L497.88,78.79 L496.93,79.39 L495.99,80.02 L495.08,80.67 L494.18,81.36 L493.30,82.07 L492.44,82.81 L491.59,83.58 L490.76,84.38 L489.95,85.21 L489.16,86.07 L488.38,86.96 Z" fill="#dc5f3a" /><text x="528.80" y="83.60" font-size="11.9" fill="#3a75b8" stroke="#3a75b8" stroke-width="0.15">A</text><text x="529.60" y="92.90" font-size="11.4" fill="#8a4bb0" stroke="#8a4bb0" stroke-width="0.15">Z</text><text x="529.60" y="108.90" font-size="11.4" fill="#8a4bb0" stroke="#8a4bb0" stroke-width="0.15">Z</text><text x="528.80" y="119.10" font-size="11.9" fill="#3a75b8" stroke="#3a75b8" stroke-width="0.15">A</text><path d="M541.8,75.5 V92.5 M537.6,87.5 L541.8,92.8 L546,87.5" fill="none" stroke="#666" stroke-width="1.1" /><path d="M541.8,101 V118.5 M537.6,113 L541.8,118.6 L546,113" fill="none" stroke="#666" stroke-width="1.1" /><path d="M572.3,111.8 V94.3 H581.5 M607.7,111.8 V94.3 H598.5" fill="#fff" stroke="#737373" stroke-width="1.1" /><rect x="572.8" y="94.8" width="9" height="17" fill="#fff" /><rect x="598.5" y="94.8" width="8.7" height="17" fill="#fff" /><rect x="582.3" y="80.4" width="4.5" height="31.4" fill="#c0d4ea" stroke="#a6a6a6" stroke-width="0.9"/><rect x="593.2" y="80.4" width="4.6" height="31.4" fill="#c0d4ea" stroke="#a6a6a6" stroke-width="0.9"/><path d="M587,76 H594 L590.5,79.8 Z" fill="#3a75b8" /><rect x="627.5" y="82.5" width="25" height="8" fill="#fff" stroke="#737373" stroke-width="1"/><rect x="637.5" y="97.5" width="25" height="8" fill="#fff" stroke="#737373" stroke-width="1"/><path d="M646,90.4 L652,97.2" fill="none" stroke="#737373" stroke-width="1" /><rect x="674.5" y="102.5" width="16" height="15" fill="#fff" /><rect x="674" y="102" width="17" height="3.6" fill="#4a7ebb" /><path d="M678.5,105.5 V117.5 M682.5,105.5 V117.5 M686.5,105.5 V117.5 M674.5,108.5 H690.5 M674.5,111.5 H690.5 M674.5,114.5 H690.5" fill="none" stroke="#a6a6a6" stroke-width="1" /><path d="M678.5,102 V105.5 M682.5,102 V105.5 M686.5,102 V105.5" fill="none" stroke="#ffffff" stroke-width="1" stroke-opacity="0.6"/><rect x="674.5" y="102.5" width="16" height="15" fill="none" stroke="#737373" stroke-width="1"/><text x="673.5" y="134.6" font-size="10" fill="#444">1</text><text x="685.5" y="144.7" font-size="10.5" fill="#444">2</text><path d="M676.5,137.5 C677,141 680,141.8 683,141.5" fill="none" stroke="#3a75b8" stroke-width="1.6" /><path d="M681.5,138.8 L684.8,141.4 L681.5,144 Z" fill="#3a75b8" stroke="#3a75b8" stroke-width="0.8" /><rect x="877.5" y="75.5" width="13.0" height="11.0" fill="#fff" /><rect x="877.0" y="75.0" width="14.0" height="2.6" fill="#4a7ebb" /><path d="M881.50,77.6 V86.5 M886.50,77.6 V86.5 M877.5,82.50 H890.5 " fill="none" stroke="#a6a6a6" stroke-width="1" /><rect x="877.5" y="75.5" width="13.0" height="11.0" fill="none" stroke="#737373" stroke-width="1"/><rect x="882.5" y="81.5" width="12.0" height="11.0" fill="#fff" /><rect x="882.0" y="81.0" width="13.0" height="3" fill="#4a7ebb" /><path d="M886.50,84.0 V92.5 M890.50,84.0 V92.5 M882.5,87.50 H894.5 M882.5,89.50 H894.5 " fill="none" stroke="#a6a6a6" stroke-width="1" /><rect x="882.5" y="81.5" width="12.0" height="11.0" fill="none" stroke="#737373" stroke-width="1"/><path d="M876.5,88.5 C876.5,92 879.5,92.5 883.5,92" fill="none" stroke="#fff" stroke-width="3.2" /><path d="M876.5,88.5 C876.5,92 879.5,92.5 883.5,92" fill="none" stroke="#3a75b8" stroke-width="1.7" /><path d="M882,89 L885.5,92 L882,95 Z" fill="#3a75b8" /><rect x="877.5" y="101.5" width="16" height="4.5" fill="#fff" /><rect x="877" y="101" width="17" height="2" fill="#4a7ebb" /><path d="M882.5,103 V106 M888.5,103 V106" fill="none" stroke="#737373" stroke-width="1" /><rect x="877.5" y="101.5" width="16" height="4.5" fill="none" stroke="#737373" stroke-width="1"/><rect x="877.5" y="114.5" width="16" height="4.5" fill="#fff" stroke="#737373" stroke-width="1"/><path d="M882.5,114.5 V119 M888.5,114.5 V119" fill="none" stroke="#737373" stroke-width="1" /><path d="M886,108 V113" fill="none" stroke="#3a75b8" stroke-width="1" stroke-dasharray="1.2,1"/><path d="M883.8,109.6 L886,107.3 L888.2,109.6 M883.8,111.4 L886,113.7 L888.2,111.4" fill="none" stroke="#3a75b8" stroke-width="1" /><rect x="877.5" y="127.5" width="17.2" height="14.5" fill="#e8eef7" stroke="#a8bedb" stroke-width="1"/><path d="M882.5,130 V137.5 M880.5,135.5 L882.5,137.8 L884.5,135.5 M889.5,130 V137.5 M887.5,135.5 L889.5,137.8 L891.5,135.5 M880,140 H892" fill="none" stroke="#97aed0" stroke-width="0.9" /><rect x="1048.5" y="76.5" width="27" height="35" fill="#fff" stroke="#737373" stroke-width="1"/><path d="M1051.3,80.4 H1058 M1051.3,90.5 H1058 M1051.3,100.4 H1058" fill="none" stroke="#8a8a8a" stroke-width="0.9" /><rect x="1061.3" y="80.2" width="10.4" height="6.3" fill="#fff" stroke="#3a75b8" stroke-width="1.1"/><rect x="1061.3" y="90.3" width="10.4" height="6.3" fill="#fff" stroke="#3a75b8" stroke-width="1.1"/><rect x="1061.3" y="100.2" width="10.4" height="6.3" fill="#fff" stroke="#3a75b8" stroke-width="1.1"/><path d="M1140.5,76.5 H1156.5 L1164.5,84.5 V109.5 H1140.5 Z" fill="#fff" stroke="#737373" stroke-width="1" /><path d="M1156.5,76.5 V84.5 H1164.5" fill="none" stroke="#737373" stroke-width="1" /><circle cx="1161.1" cy="102.9" r="10.5" fill="#f5f3f4"/><path d="M1170.80,100.48 L1170.80,105.32 L1167.96,105.40 L1166.69,107.59 L1168.05,110.09 L1163.86,112.51 L1162.37,110.09 L1159.83,110.09 L1158.34,112.51 L1154.15,110.09 L1155.51,107.59 L1154.24,105.40 L1151.40,105.32 L1151.40,100.48 L1154.24,100.40 L1155.51,98.21 L1154.15,95.71 L1158.34,93.29 L1159.83,95.71 L1162.37,95.71 L1163.86,93.29 L1168.05,95.71 L1166.69,98.21 L1167.96,100.40 Z" fill="#e8873a" /><circle cx="1161.1" cy="102.9" r="3.2" fill="#fff"/><path d="M1209.5,75.5 H1219.5 L1223.5,79.5 V92.5 H1209.5 Z" fill="#fff" stroke="#737373" stroke-width="1" /><path d="M1219.5,75.5 V79.5 H1223.5" fill="none" stroke="#737373" stroke-width="1" /><circle cx="1222.9" cy="89" r="6.5" fill="#f5f3f4"/><path d="M1218.6,84.2 V91.8 A4.2,1.9 0 0 0 1227.2,91.8 V84.2 Z" fill="#e6bc78" /><ellipse cx="1222.9" cy="84.2" rx="4.3" ry="1.9" fill="#efcf98" stroke="#fff" stroke-width="0.6"/><path d="M1209.5,101.5 H1219.5 L1223.5,105.5 V118.5 H1209.5 Z" fill="#fff" stroke="#737373" stroke-width="1" /><path d="M1219.5,101.5 V105.5 H1223.5" fill="none" stroke="#737373" stroke-width="1" /><circle cx="1222" cy="114.9" r="4.6" fill="#fff" stroke="#3a75b8" stroke-width="1.1"/><path d="M1222,112.3 V115.3 H1224.4" fill="none" stroke="#444" stroke-width="0.9" /><rect x="1209.5" y="127.5" width="16.0" height="15.0" fill="#fff" /><rect x="1209.0" y="127.0" width="17.0" height="3" fill="#4a7ebb" /><path d="M1214.50,130.0 V142.5 M1220.50,130.0 V142.5 M1209.5,134.50 H1225.5 M1209.5,138.50 H1225.5 " fill="none" stroke="#a6a6a6" stroke-width="1" /><rect x="1209.5" y="127.5" width="16.0" height="15.0" fill="none" stroke="#737373" stroke-width="1"/><rect x="25.5" y="223.5" width="16.0" height="14.0" fill="#fff" /><rect x="25.0" y="223.0" width="17.0" height="2.6" fill="#4a7ebb" /><path d="M30.50,225.6 V237.5 M36.50,225.6 V237.5 M25.5,229.50 H41.5 M25.5,233.50 H41.5 " fill="none" stroke="#a6a6a6" stroke-width="1" /><rect x="25.5" y="223.5" width="16.0" height="14.0" fill="none" stroke="#737373" stroke-width="1"/><rect x="25.5" y="253.5" width="16.0" height="14.0" fill="#fff" /><rect x="25.0" y="253.0" width="17.0" height="2.6" fill="#4a7ebb" /><path d="M30.50,255.60000000000002 V267.5 M36.50,255.60000000000002 V267.5 M25.5,259.50 H41.5 M25.5,263.50 H41.5 " fill="none" stroke="#a6a6a6" stroke-width="1" /><rect x="25.5" y="253.5" width="16.0" height="14.0" fill="none" stroke="#737373" stroke-width="1"/><rect x="25.5" y="283.5" width="16.0" height="14.0" fill="#fff" /><rect x="25.0" y="283.0" width="17.0" height="2.6" fill="#4a7ebb" /><path d="M30.50,285.6 V297.5 M36.50,285.6 V297.5 M25.5,289.50 H41.5 M25.5,293.50 H41.5 " fill="none" stroke="#a6a6a6" stroke-width="1" /><rect x="25.5" y="283.5" width="16.0" height="14.0" fill="none" stroke="#737373" stroke-width="1"/></svg>
</body></html>
